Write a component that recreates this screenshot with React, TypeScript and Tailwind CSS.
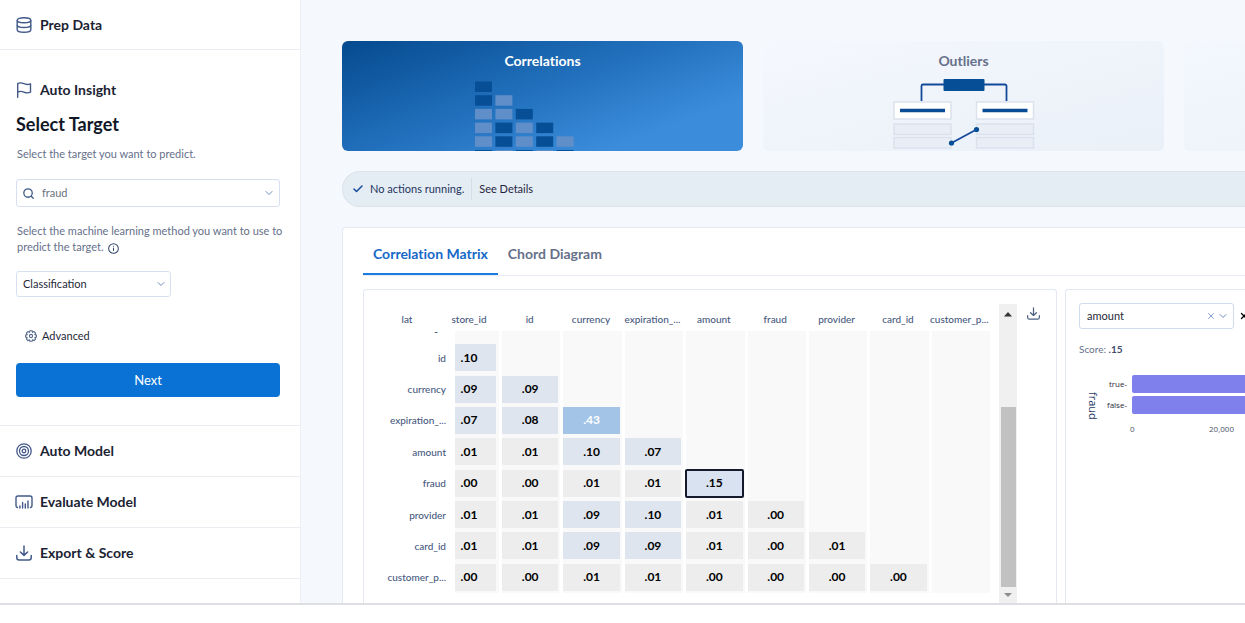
import { useState } from 'react';
import { Check, ChevronDown, X } from 'lucide-react';

const COLUMNS = ['store_id', 'id', 'currency', 'expiration_...', 'amount', 'fraud', 'provider', 'card_id', 'customer_p...'];

const ROWS: { label: string; values: string[] }[] = [
  { label: 'id', values: ['.10'] },
  { label: 'currency', values: ['.09', '.09'] },
  { label: 'expiration_...', values: ['.07', '.08', '.43'] },
  { label: 'amount', values: ['.01', '.01', '.10', '.07'] },
  { label: 'fraud', values: ['.00', '.00', '.01', '.01', '.15'] },
  { label: 'provider', values: ['.01', '.01', '.09', '.10', '.01', '.00'] },
  { label: 'card_id', values: ['.01', '.01', '.09', '.09', '.01', '.00', '.01'] },
  { label: 'customer_p...', values: ['.00', '.00', '.01', '.01', '.00', '.00', '.00', '.00'] },
];

function tileColor(value: string) {
  const score = Number(value);
  if (score > 0.4) return 'bg-[#a3c4e7] text-white';
  if (score > 0.12) return 'bg-[#d8e2f0] text-black';
  if (score > 0.05) return 'bg-[#dfe5ee] text-black';
  return 'bg-[#ededee] text-black';
}

function DatabaseIcon() {
  return (
    <svg className="size-4" viewBox="0 0 16 16" fill="none" stroke="currentColor" strokeWidth="1.4">
      <ellipse cx="8" cy="3.2" rx="6.8" ry="2.5" />
      <path d="M1.2 3.2v9.6c0 1.4 3 2.5 6.8 2.5s6.8-1.1 6.8-2.5V3.2" />
      <path d="M1.2 8c0 1.4 3 2.5 6.8 2.5s6.8-1.1 6.8-2.5" />
    </svg>
  );
}

function FlagIcon() {
  return (
    <svg className="size-4" viewBox="0 0 16 16" fill="none" stroke="currentColor" strokeWidth="1.4" strokeLinecap="round" strokeLinejoin="round">
      <path d="M1.7 15.3V1.6c2-1 4-.9 6.2.1s4.2 1 6.6.1v8.4c-2.4 1-4.4.9-6.6-.1s-4.2-1-6.2 0" />
    </svg>
  );
}

function TargetIcon() {
  return (
    <svg className="size-4" viewBox="0 0 16 16" fill="none" stroke="currentColor" strokeWidth="1.3">
      <circle cx="8" cy="8" r="7.2" />
      <circle cx="8" cy="8" r="4.5" />
      <circle cx="8" cy="8" r="1.8" />
    </svg>
  );
}

function EvaluateIcon() {
  return (
    <svg className="size-4 overflow-visible" viewBox="0 0 16 16" fill="none" stroke="currentColor" strokeWidth="1.4" strokeLinecap="round">
      <path d="M1.4 13.5A2 2 0 0 1 0 11.5V4a2 2 0 0 1 2-2h12a2 2 0 0 1 2 2v7.5a2 2 0 0 1-1.4 2" />
      <path d="M3.9 12v2M6.6 8.5V14M9.3 10V14M12 7V14" />
    </svg>
  );
}

function DownloadIcon({ className }: { className: string }) {
  return (
    <svg className={className} viewBox="0 0 16 16" fill="none" stroke="currentColor" strokeWidth="1.5" strokeLinecap="round" strokeLinejoin="round">
      <path d="M8 1v9.2M4.4 7 8 10.4 11.6 7" />
      <path d="M.8 10.5v2.3a2.2 2.2 0 0 0 2.2 2.2h10a2.2 2.2 0 0 0 2.2-2.2v-2.3" />
    </svg>
  );
}

function GearIcon() {
  return (
    <svg className="size-3 text-[#52688c]" viewBox="0 0 24 24" fill="none" stroke="currentColor" strokeWidth="2.2" strokeLinejoin="round">
      <path d="M9.8 1.5h4.4l.9 3.2 3-1.5 3.1 3.1-1.6 2.9 3.1.9v4.1l-3.1.9 1.6 3-3.1 3.1-3-1.6-.9 3h-4.4l-.9-3-3 1.6-3.1-3.1 1.6-3-3.1-.9v-4.1l3.1-.9-1.6-2.900 3.1-3.1 3 1.5Z" />
      <circle cx="12" cy="12" r="3.2" />
    </svg>
  );
}

function SearchIcon() {
  return (
    <svg className="size-[11px] shrink-0 text-[#3f5a86]" viewBox="0 0 12 12" fill="none" stroke="currentColor" strokeWidth="1.4" strokeLinecap="round">
      <circle cx="5.5" cy="5.5" r="4.6" />
      <path d="m9 9 2.2 2.2" />
    </svg>
  );
}

function InfoIcon() {
  return (
    <svg className="ml-1 inline size-[11px] align-[-3px] text-[#33496f]" viewBox="0 0 12 12" fill="none" stroke="currentColor" strokeWidth="1.1">
      <circle cx="6" cy="6" r="5.3" />
      <path d="M6 5.2v3.6M6 3v1.2" />
    </svg>
  );
}

function StepLink({ icon, label }: { icon: React.ReactNode; label: string }) {
  return (
    <a href="#" className="flex h-[51px] items-center gap-2 border-b border-[#e9ecf1] px-4 text-[14px] font-bold leading-5 text-[#1b2333]">
      <span className="text-[#43598a]">{icon}</span>
      {label}
    </a>
  );
}

function Sidebar() {
  const [target, setTarget] = useState('fraud');

  return (
    <aside className="w-[301px] shrink-0 border-r border-[#edf1f7] bg-white">
      <a href="#" className="flex h-[50px] items-center gap-2 border-b border-[#e9ecf1] px-4 text-[14px] font-bold leading-5 text-[#1b2333]">
        <span className="text-[#43598a]"><DatabaseIcon /></span>
        Prep Data
      </a>

      <section className="border-b border-[#e9ecf1] px-4 pt-[30px] pb-7">
        <div className="flex items-center gap-2 text-[14px] font-bold leading-5 text-[#1b2333]">
          <span className="text-[#43598a]"><FlagIcon /></span>
          Auto Insight
        </div>
        <h2 className="mt-3 text-[18px] font-bold leading-6 text-[#101828]">Select Target</h2>
        <label htmlFor="target" className="mt-[10px] block pl-px text-[11px] leading-4 text-[#66708a]">
          Select the target you want to predict.
        </label>
        <div className="mt-[17px] mr-1 flex h-7 items-center gap-2 rounded-[3px] border border-[#d8dff0] px-1">
          <span className="pl-0.5"><SearchIcon /></span>
          <input
            id="target"
            type="text"
            value={target}
            onChange={(e) => setTarget(e.target.value)}
            className="min-w-0 flex-1 text-[11px] leading-4 text-[#6b7280] outline-none"
          />
          <ChevronDown className="size-3 text-[#6f8bbd]" />
        </div>

        <label htmlFor="method" className="mt-4 block pl-px text-[11px] leading-4 text-[#66708a]">
          Select the machine learning method you want to use to predict the target.
          <InfoIcon />
        </label>
        <div className="mt-4 grid w-[155px] items-center">
          <select
            id="method"
            className="col-start-1 row-start-1 h-[26px] appearance-none rounded-[3px] border border-[#d8dff0] bg-white pl-[6px] text-[11px] leading-4 text-[#1f2937]"
          >
            <option>Classification</option>
            <option>Regression</option>
          </select>
          <ChevronDown className="pointer-events-none col-start-1 row-start-1 mr-1 size-3 justify-self-end text-[#6f8bbd]" />
        </div>

        <button type="button" className="mt-[31px] flex items-center gap-[5px] pl-[9px] text-[11px] leading-4 text-[#1f2937]">
          <GearIcon />
          Advanced
        </button>
        <button type="button" className="mt-[19px] mr-1 block h-[34px] w-[264px] rounded-[4px] bg-[#0a72d4] text-[13px] leading-5 text-white">
          Next
        </button>
      </section>

      <StepLink icon={<TargetIcon />} label="Auto Model" />
      <StepLink icon={<EvaluateIcon />} label="Evaluate Model" />
      <StepLink icon={<DownloadIcon className="size-4" />} label="Export & Score" />
    </aside>
  );
}

// 1 = dark block, 0 = light block
const BLOCKS = [[1], [1, 0], [0, 0, 1], [0, 1, 0, 1], [0, 1, 0, 1, 0], [1, 0, 1, 0, 1]];

function CorrelationsArt() {
  return (
    <svg className="mt-[10px] block h-[70px] w-[135px]" viewBox="0 0 135 70">
      {BLOCKS.map((row, y) =>
        row.map((dark, x) => (
          <rect key={`${y}-${x}`} x={x * 20.4} y={y * 13.7 + 0.5} width="17" height="10.5" fill={dark ? '#064f96' : '#5f8ec8'} />
        ))
      )}
    </svg>
  );
}

function OutliersArt() {
  return (
    <svg className="mt-2 block h-[70px] w-[142px]" viewBox="0 0 142 70" fill="none">
      <path d="M28.5 22V7a1.5 1.5 0 0 1 1.5-1.5h82a1.5 1.5 0 0 1 1.5 1.5v15" stroke="#13499b" strokeWidth="1.8" />
      <rect x="50.5" y="0" width="41" height="12" rx="1" fill="#064f96" />
      <g stroke="#dbe2ed" strokeWidth="1.5">
        <rect x="1" y="23" width="57" height="17" fill="#fff" />
        <rect x="83.5" y="23" width="57" height="17" fill="#fff" />
        <rect x="1" y="45" width="57" height="10.5" fill="#e9eef6" />
        <rect x="1" y="58.5" width="57" height="10.5" fill="#e9eef6" />
        <rect x="83.5" y="45" width="57" height="10.5" fill="#e9eef6" />
        <rect x="83.5" y="58.5" width="57" height="10.5" fill="#e9eef6" />
      </g>
      <path d="M7 31.5h45M89.5 31.5h45" stroke="#0b4a94" strokeWidth="3.4" />
      <path d="M58.5 64 83.5 50.5" stroke="#13499b" strokeWidth="1.8" />
      <circle cx="58.5" cy="64" r="2.6" fill="#064f96" />
      <circle cx="83.5" cy="50.5" r="2.6" fill="#064f96" />
    </svg>
  );
}

function Scrollbar() {
  return (
    <div className="flex w-[18px] flex-col items-center bg-[#f0f0f0]">
      <svg className="mt-[6px] h-2 w-[10px]" viewBox="0 0 10 8"><path d="M1 6.5 5 2l4 4.5z" fill="#333" /></svg>
      <div className="mt-[89px] w-[15px] flex-1 bg-[#c1c1c1]" />
      <svg className="my-1 h-2 w-[10px]" viewBox="0 0 10 8"><path d="M1 2l4 4 4-4z" fill="#8e8e90" /></svg>
    </div>
  );
}

function CorrelationMatrix() {
  return (
    <table className="mb-[10px] h-[289px] w-[626px] table-fixed border-separate border-spacing-0">
      <thead>
        <tr className="h-[27px] text-[10px] leading-4 text-[#475980]">
          <th scope="col" className="w-[86px] p-0 pt-0.5 font-medium">lat</th>
          {COLUMNS.map((name, i) => (
            <th key={name} scope="col" className={i === 0 ? 'w-[49px] p-0 pt-0.5 pr-[11px] font-medium' : 'p-0 pt-0.5 font-medium'}>
              {name}
            </th>
          ))}
        </tr>
      </thead>
      <tbody>
        <tr className="h-[11px]">
          <th className="p-0 pr-3 text-right align-top text-[10px] leading-[0px] text-[#475980]">-</th>
          {COLUMNS.map((name, i) => (
            <td key={name} className={i === 0 ? 'border-l-5 border-white bg-[#f9f9f9] p-0' : 'border-l-3 border-white bg-[#f9f9f9] p-0'} />
          ))}
        </tr>
        {ROWS.map((row) => (
          <tr key={row.label}>
            <th scope="row" className="p-0 pr-1 text-right text-[10px] font-medium leading-4 text-[#475980]">{row.label}</th>
            {COLUMNS.map((name, i) => {
              const value = row.values[i];
              const selected = row.label === 'fraud' && name === 'amount';
              return (
                <td
                  key={name}
                  className={
                    i === 0
                      ? 'border-l-5 border-white bg-[#f9f9f9] p-0 py-0.5 pr-[3px]'
                      : 'border-l-3 border-white bg-[#f9f9f9] p-0 py-0.5 pr-0.5'
                  }
                >
                  {value && (
                    <div
                      className={`flex h-[27px] items-center justify-center text-[12px] font-bold leading-4 ${tileColor(value)} ${
                        i === 0 ? 'pr-[13px]' : ''
                      } ${selected ? 'rounded-[1px] outline-2 -outline-offset-1 outline-[#151a2c]' : ''}`}
                    >
                      {value}
                    </div>
                  )}
                </td>
              );
            })}
          </tr>
        ))}
      </tbody>
    </table>
  );
}

function DetailPanel() {
  const [column, setColumn] = useState('amount');

  return (
    <section className="min-w-0 flex-1 overflow-hidden rounded-tl-[3px] border-t border-l border-[#e3e8f2] pt-[13px] pl-[13px]">
      <div className="flex items-center gap-[5px]">
        <div className="flex h-[26px] w-[155px] shrink-0 items-center rounded-[3px] border border-[#cfdcee] pr-1 pl-[7px]">
          <input
            aria-label="Column"
            type="text"
            value={column}
            onChange={(e) => setColumn(e.target.value)}
            className="min-w-0 flex-1 text-[11px] leading-4 text-[#1f2937] outline-none"
          />
          <button type="button" aria-label="Clear" onClick={() => setColumn('')}>
            <X className="size-[10px] text-[#6f8bbd]" />
          </button>
          <ChevronDown className="ml-px size-3 text-[#6f8bbd]" />
        </div>
        <button type="button" aria-label="Close" className="shrink-0">
          <X className="size-[10px] text-black" strokeWidth={3} />
        </button>
      </div>
      <p className="mt-3 text-[10px] leading-4 text-[#66708a]">
        Score: <b className="text-[#3f4c6b]">.15</b>
      </p>
      <div className="mt-[18px] flex font-['Open_Sans',sans-serif] text-[8px] leading-[10px] text-[#1f2937]">
        <span className="mt-[17px] ml-[7px] h-7 text-[11px] leading-[14px] text-[#263a66] [writing-mode:vertical-rl]">fraud</span>
        <div className="flex w-[28px] flex-col items-end gap-[3px] pr-px text-right">
          <span className="h-[18px] leading-[18px]">true-</span>
          <span className="h-[18px] leading-[18px]">false-</span>
        </div>
        <div className="flex min-w-0 flex-1 flex-col gap-[3px]">
          <div className="ml-1 h-[18px] rounded-l-[2px] bg-[#7f80ec]" />
          <div className="ml-1 h-[18px] rounded-l-[2px] bg-[#7f80ec]" />
          <div className="mt-[7px] flex justify-between pr-[11px] pl-[2px] text-[#4b5468]">
            <span>0</span>
            <span>20,000</span>
          </div>
        </div>
      </div>
    </section>
  );
}

export default function App() {
  const [tab, setTab] = useState('matrix');
  const activeTab = 'border-b-2 border-[#1b7be0] px-[10px] pb-[9px] text-[#1668c8]';
  const idleTab = 'border-b-2 border-transparent px-[10px] pb-[9px] text-[#66708a]';

  return (
    <div className="bg-white font-[Lato,'Liberation_Sans',sans-serif]">
      <div className="flex border-b-2 border-[#dddfe2]">
        <Sidebar />
        <main className="flex min-w-0 flex-1 flex-col overflow-hidden bg-[#f5f8fd] pt-[41px] pl-[41px]">
          <div className="flex gap-5 [font-variant-ligatures:none]">
            <button
              type="button"
              className="flex h-[110px] w-[401px] shrink-0 flex-col items-center overflow-hidden rounded-[6px] bg-[linear-gradient(160deg,#054a8f_0%,#2473c0_50%,#3b8ddb_80%)] pt-[10px] text-[14px] font-bold leading-5 text-white"
            >
              Correlations
              <CorrelationsArt />
            </button>
            <button
              type="button"
              className="flex h-[110px] w-[401px] shrink-0 flex-col items-center overflow-hidden rounded-[6px] bg-linear-to-br from-[#f5f8fd] to-[#e9f0f8] pt-[10px] text-[14px] font-bold leading-5 text-[#66708a]"
            >
              Outliers
              <OutliersArt />
            </button>
            <div className="h-[110px] w-[401px] shrink-0 rounded-[6px] bg-linear-to-br from-[#f4f8fd] to-[#e9f0f8]" />
          </div>

          <div className="mt-5 flex h-9 items-center rounded-l-full border border-r-0 border-[#dbe3ea] bg-[#e5edf4] pl-[9px] text-[11px] leading-4">
            <Check className="size-3 text-[#13499b]" strokeWidth={3} />
            <span className="ml-[6px] text-[#1d3461]">No actions running.</span>
            <a href="#" className="ml-[7px] border-l border-[#d5dde6] py-[3px] pl-[7px] text-[#1f2540]">See Details</a>
          </div>

          <div className="mt-5 flex flex-1 flex-col rounded-tl-[4px] border-t border-l border-[#e3e8f2] bg-white pt-4 pl-5">
            <div className="flex border-b border-[#e9edf3] text-[14px] font-bold leading-5 [font-variant-ligatures:none]" role="tablist">
              <button type="button" role="tab" aria-selected={tab === 'matrix'} onClick={() => setTab('matrix')} className={tab === 'matrix' ? activeTab : idleTab}>
                Correlation Matrix
              </button>
              <button type="button" role="tab" aria-selected={tab === 'chord'} onClick={() => setTab('chord')} className={tab === 'chord' ? activeTab : idleTab}>
                Chord Diagram
              </button>
            </div>

            <div className="mt-[13px] flex flex-1 gap-2">
              <section className="flex w-[694px] shrink-0 rounded-t-[3px] border border-b-0 border-[#e3e8f2] pt-[14px]">
                <CorrelationMatrix />
                <div className="ml-[9px] flex"><Scrollbar /></div>
                <button type="button" aria-label="Download" className="ml-[10px] self-start pt-[3px] text-[#4c5f80]">
                  <DownloadIcon className="size-[13px]" />
                </button>
              </section>
              <DetailPanel />
            </div>
          </div>
        </main>
      </div>
    </div>
  );
}
